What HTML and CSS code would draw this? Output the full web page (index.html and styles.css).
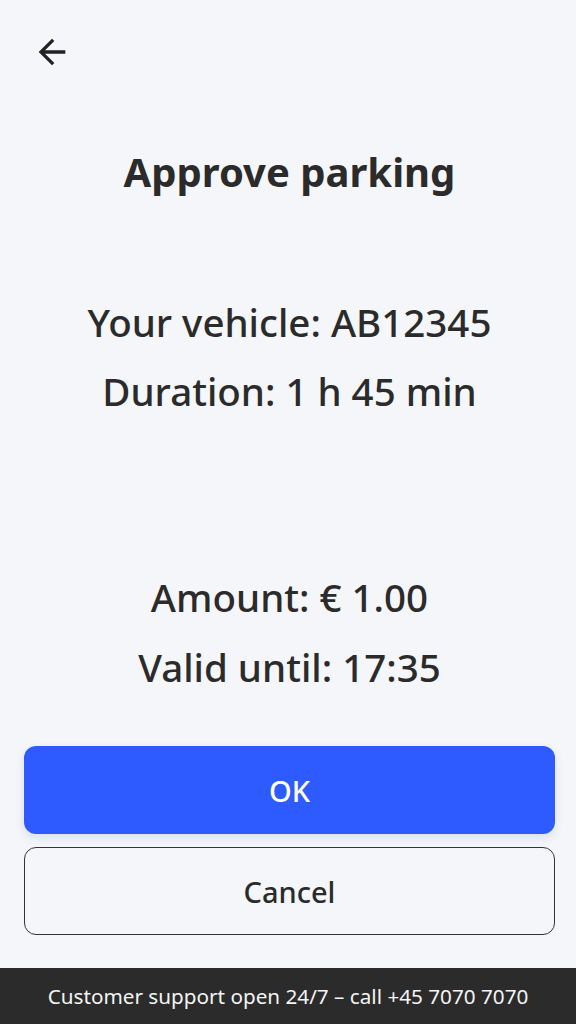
FILE: index.html
```html
<!DOCTYPE html>
<html lang="en">
<head>
  <meta charset="UTF-8" />
  <title>Approve parking</title>
  <link rel="stylesheet" href="styles.css">
</head>
<body>
  <div class="screen">
    <main class="content">
      <header class="topbar">
        <button class="back" aria-label="Back">
          <svg width="40" height="40" viewBox="0 0 24 24">
            <path d="M20 11H7.83l5.59-5.59L12 4l-8 8 8 8 1.41-1.41L7.83 13H20v-2z" fill="#222"/>
          </svg>
        </button>
      </header>

      <h1 class="title">Approve parking</h1>

      <div class="info info-top">
        <p>Your vehicle: AB12345</p>
        <p>Duration: 1 h 45 min</p>
      </div>

      <div class="info info-bottom">
        <p>Amount: € 1.00</p>
        <p>Valid until: 17:35</p>
      </div>

      <div class="actions">
        <button class="btn btn-ok">OK</button>
        <button class="btn btn-cancel">Cancel</button>
      </div>
    </main>

    <footer class="support">Customer support open 24/7 – call +45 7070 7070</footer>
  </div>
</body>
</html>
```

FILE: styles.css
```css
* { box-sizing: border-box; }
body {
  margin: 0;
  font-family: "Noto Sans", "Open Sans", sans-serif;
  background-color: #f5f6fa;
  color: #2b2b2b;
}
.screen {
  height: 1024px;
  display: flex;
  flex-direction: column;
}
.content {
  flex: 1;
  display: flex;
  flex-direction: column;
  padding: 0 21px 0 24px;
}

/* barra superior com a seta de voltar */
.topbar { padding-top: 32px; height: 72px; }
.back {
  background: none;
  border: none;
  padding: 0;
  margin-left: 8px;
  width: 40px;
  height: 40px;
  cursor: pointer;
}
.back svg { display: block; }

.title {
  margin: 76px 0 0;
  text-align: center;
  font-size: 40px;
  line-height: 48px;
  font-weight: 700;
}

.info { text-align: center; font-size: 38.5px; font-weight: 500; }
.info p { margin: 0; }
.info-top { margin-top: 92px; line-height: 69px; }
.info-bottom { margin-top: 136px; line-height: 70px; }

.actions {
  margin-top: 44px;
  display: flex;
  flex-direction: column;
  gap: 13px;
}
.btn {
  height: 88px;
  border-radius: 12px;
  font-family: inherit;
  font-size: 29px;
  font-weight: 500;
  cursor: pointer;
}
.btn-ok {
  background-color: #2e5bff;
  color: white;
  border: none;
  box-shadow: 0 4px 10px rgba(40, 60, 140, 0.12);
}
.btn-cancel {
  background-color: transparent;
  color: #2b2b2b;
  border: 1.5px solid #333;
}

.support {
  height: 56px;
  background-color: #2b2b2b;
  color: #f4f4f4;
  font-size: 20.7px;
  display: flex;
  align-items: center;
  justify-content: center;
}
```
